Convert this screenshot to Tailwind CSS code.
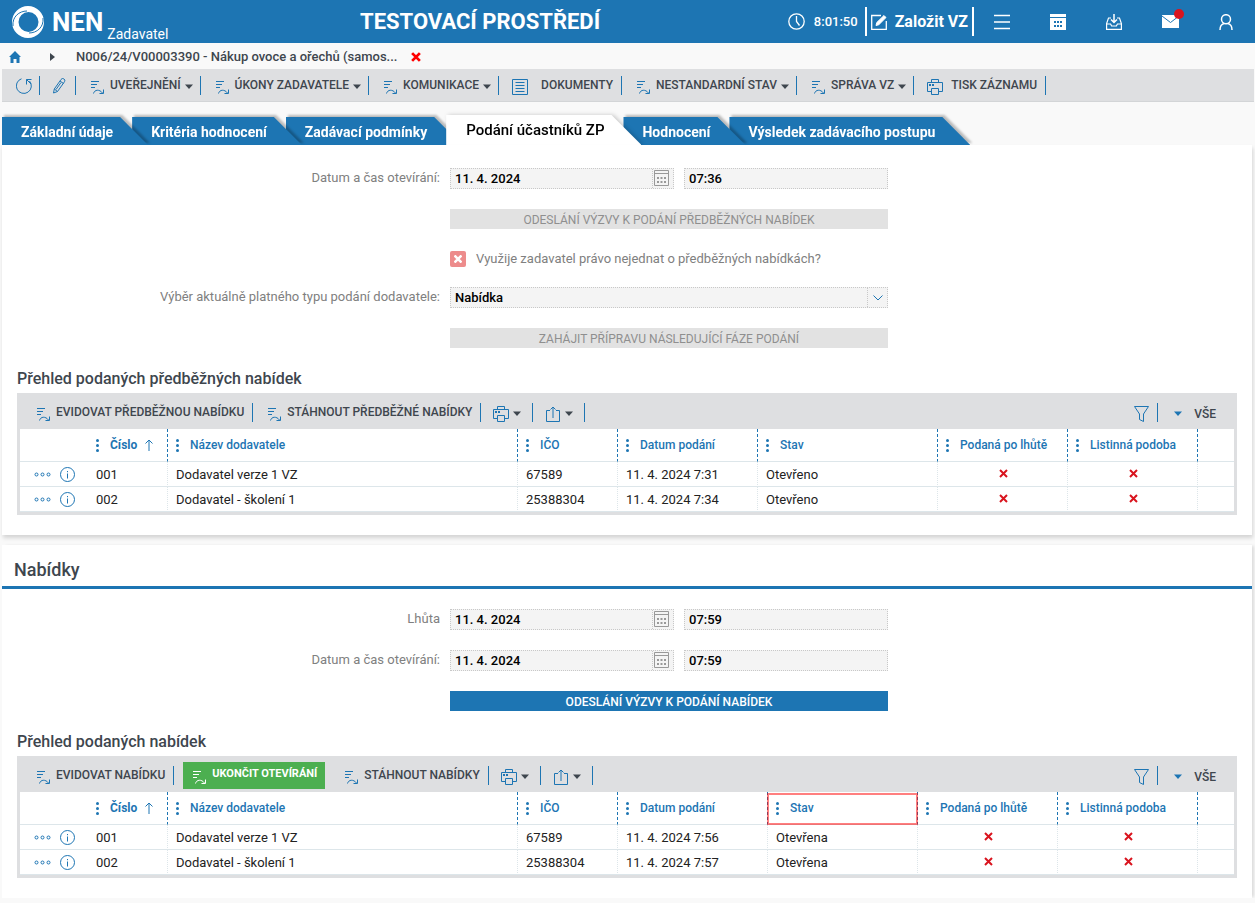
<!DOCTYPE html>
<html lang="cs">
<head>
    <meta charset="UTF-8">
    <meta name="viewport" content="width=device-width, initial-scale=1.0">
    <title>NEN - Zadavatel</title>
    <script src="https://cdn.jsdelivr.net/npm/@tailwindcss/browser@4"></script>
</head>
<body class="bg-[#f9f9f9] font-['Roboto',sans-serif] text-[13px] text-[#3e464e]">

    <!-- icons -->
    <svg class="hidden">
        <symbol id="i-flow" viewBox="0 -1 14 19" fill="none" stroke="currentColor">
            <path d="M1 5.500h8M1 8.500h6M1 11.500h4"/>
            <path d="M3.500 17.500c1-4 6-4.500 9-.5M13.500 13.500v4h-4"/>
        </symbol>
        <symbol id="i-print" viewBox="0 0 16 16" fill="none" stroke="currentColor">
            <path d="M4.500 3.500v-3h7v3M4.500 12.500h-4v-9h15v9h-4M4.500 9.500h7v6h-7z"/>
            <path d="M2 6h2M5 6h2" stroke-width="2"/>
        </symbol>
        <symbol id="i-share" viewBox="0 0 14 16" fill="none" stroke="currentColor">
            <path d="M4 4.500H.5v11h13v-11H10M7 12V1M4.500 3.500L7 1l2.500 2.500"/>
        </symbol>
        <symbol id="i-funnel" viewBox="0 0 15 16" fill="none" stroke="currentColor">
            <path d="M.5 .5h14L9.500 8v7.500l-4-2V8z"/>
        </symbol>
        <symbol id="i-caret" viewBox="0 0 8 5"><path d="M0 .5h8L4 5z" fill="currentColor"/></symbol>
        <symbol id="i-dots" viewBox="0 0 3 13" fill="currentColor">
            <circle cx="1.500" cy="1.500" r="1.500"/><circle cx="1.500" cy="6.500" r="1.500"/><circle cx="1.500" cy="11.500" r="1.500"/>
        </symbol>
        <symbol id="i-up" viewBox="0 0 8 12" fill="none" stroke="currentColor"><path d="M4 12V1M.5 4.500L4 1l3.500 3.500"/></symbol>
        <symbol id="i-more" viewBox="0 0 17 5" fill="none" stroke="currentColor">
            <circle cx="2.500" cy="2.500" r="1.500"/><circle cx="8.500" cy="2.500" r="1.500"/><circle cx="14.500" cy="2.500" r="1.500"/>
        </symbol>
        <symbol id="i-info" viewBox="0 0 15 15" fill="none" stroke="currentColor">
            <circle cx="7.500" cy="7.500" r="7"/><path d="M7.500 6.500v5M7.500 4v1.200"/>
        </symbol>
        <symbol id="i-x" viewBox="0 0 9 9"><path d="M1 1l7 7M8 1L1 8" stroke="currentColor" stroke-width="2"/></symbol>
        <symbol id="i-cal" viewBox="0 0 15 16" fill="none" stroke="currentColor">
            <path d="M.5 .5h14v15H.5zM.5 3.500h14"/>
            <path d="M3 8h2M6.500 8h2M10 8h2M3 12h2M6.500 12h2M10 12h2" stroke-width="2"/>
        </symbol>
    </svg>

    <header class="flex h-[43px] items-center bg-[#1d75b3] pr-px text-white">
        <div class="flex h-full w-[360px] shrink-0 items-center pl-3">
            <svg class="size-8" viewBox="0 0 32 32">
                <path fill="currentColor" fill-rule="evenodd" d="M16 0a16 16 0 1 1 0 32a16 16 0 1 1 0-32zM16.500 6a10 10 0 1 0 0 20a10 10 0 1 0 0-20z"/>
                <path d="M1 20C0 11 7 5 15 5M31 12c1 9-6 15-14 15" fill="none" stroke="#1d75b3"/>
            </svg>
            <span class="ml-2 text-[26px] leading-8 font-bold">NEN</span>
            <span class="mb-px ml-1 self-end text-sm leading-4">Zadavatel</span>
        </div>
        <div class="text-[22px] font-bold">TESTOVACÍ PROSTŘEDÍ</div>
        <div class="ml-auto flex items-center">
            <svg class="size-[17px]" viewBox="0 0 17 17" fill="none" stroke="currentColor" stroke-width="1.300"><circle cx="8.500" cy="8.500" r="7.700"/><path d="M8.500 3v5.500l3 4"/></svg>
            <span class="mr-[7px] ml-[9px] font-medium">8:01:50</span>
            <button class="flex h-[29px] items-center gap-2 border-x-2 border-white px-1 text-base font-bold">
                <svg class="size-4" viewBox="0 0 16 16" fill="none" stroke="currentColor"><path d="M10 1.500H.7v13.800h14.600V7" stroke-width="1.300"/><path d="M5 11.500l.8-3L13 1.500l2 2-7.200 7.200z" fill="currentColor"/></svg>
                Založit VZ
            </button>
            <button class="flex w-14 justify-center" aria-label="Menu">
                <svg class="size-4" viewBox="0 0 16 16" stroke="currentColor" stroke-width="1.500"><path d="M0 1.500h16M0 8h16M0 14.500h16"/></svg>
            </button>
            <button class="flex w-14 justify-center" aria-label="Kalendář">
                <svg class="size-4" viewBox="0 0 16 16"><path d="M0 0h16v3H0zM0 4h16v12H0z" fill="currentColor"/><path d="M4 8h2M7 8h2M10 8h2M4 12h2M7 12h2M10 12h2" stroke="#1d75b3" stroke-width="2"/></svg>
            </button>
            <button class="flex w-14 justify-center" aria-label="Přijaté">
                <svg class="size-4" viewBox="0 0 16 16" fill="none" stroke="currentColor" stroke-width="1.200"><path d="M5 4H2.500L.6 9.500v5.900h14.800V9.500L13.500 4H11M.6 10h4l1 2h4.800l1-2h4"/><path d="M8 0v8.500M5 5.500l3 3 3-3" stroke-width="1.500"/></svg>
            </button>
            <button class="relative flex w-14 justify-center" aria-label="Zprávy">
                <svg class="h-[13px] w-[17px]" viewBox="0 0 17 13"><path d="M0 0h17v13H0z" fill="currentColor"/><path d="M0 1l8.500 6.500L17 1" fill="none" stroke="#1d75b3"/></svg>
                <span class="absolute -top-1.5 right-3.5 size-2.5 rounded-full bg-[#d9141e]"></span>
            </button>
            <button class="flex w-14 justify-center" aria-label="Uživatel">
                <svg class="h-4 w-[14px]" viewBox="0 0 14 16" fill="none" stroke="currentColor" stroke-width="1.500"><ellipse cx="7" cy="5.200" rx="4.500" ry="4.500"/><path d="M1 16c0-4 2-6 4-6.500M13 16c0-4-2-6-4-6.500"/></svg>
            </button>
        </div>
    </header>

    <nav class="flex h-[26px] items-center pt-0.5 pl-[9px] font-medium">
        <a href="#" class="text-[#1d75b3]" aria-label="Domů">
            <svg class="h-3 w-3" viewBox="0 0 12 12"><path d="M6 0l6 6h-1.500v6h-3V8h-3v4h-3V6H0z" fill="currentColor"/></svg>
        </a>
        <svg class="ml-[29px] h-2 w-[5px]" viewBox="0 0 5 8"><path d="M0 0l5 4-5 4z" fill="currentColor"/></svg>
        <a href="#" class="ml-[21px]">N006/24/V00003390 - Nákup ovoce a ořechů (samos...</a>
        <button class="ml-[14px] text-[#f00]" aria-label="Zavřít"><svg class="size-[10px]" viewBox="0 0 9 9"><path d="M1 1l7 7M8 1L1 8" stroke="currentColor" stroke-width="2.500"/></svg></button>
    </nav>

    <div class="mr-px ml-0.5 flex h-[33px] border-b border-[#d3d5d7] bg-[#dedfe1] pt-[7px] text-xs font-medium">
        <button class="flex h-[19px] border-r border-[#1d75b3] pt-0.5 pr-[7px] pl-[14px] text-[#1d75b3]" aria-label="Obnovit">
            <svg class="size-4" viewBox="0 0 16 16" fill="none" stroke="currentColor"><path d="M5.500 .8A7.500 7.500 0 1 0 13.500 3M10.500 6.500V1.500h5M10.500 1.500L15 6"/></svg>
        </button>
        <button class="flex h-[19px] border-r border-[#1d75b3] pt-0.5 pr-2 pl-3 text-[#1d75b3]" aria-label="Upravit">
            <svg class="h-4 w-[15px]" viewBox="0 0 15 16" fill="none" stroke="currentColor"><path d="M1.500 15l.8-4L9 1.500a2 2 0 0 1 3.500 2.200L5.500 13.500zM8 3l3.500 2.500M2.300 11l3.200 2.500M4 11.500l5-7"/></svg>
        </button>
        <button class="flex h-[19px] items-center border-r border-[#1d75b3] pr-[7px] pb-0.5 pl-[14px]">
            <svg class="mr-1.5 h-[19px] w-[14px] text-[#1d75b3]"><use href="#i-flow"/></svg>UVEŘEJNĚNÍ<svg class="mt-1 ml-1 h-[5px] w-2"><use href="#i-caret"/></svg>
        </button>
        <button class="flex h-[19px] items-center border-r border-[#1d75b3] pr-[7px] pb-0.5 pl-[14px]">
            <svg class="mr-1.5 h-[19px] w-[14px] text-[#1d75b3]"><use href="#i-flow"/></svg>ÚKONY ZADAVATELE<svg class="mt-1 ml-1 h-[5px] w-2"><use href="#i-caret"/></svg>
        </button>
        <button class="flex h-[19px] items-center border-r border-[#1d75b3] pr-[7px] pb-0.5 pl-[14px]">
            <svg class="mr-1.5 h-[19px] w-[14px] text-[#1d75b3]"><use href="#i-flow"/></svg>KOMUNIKACE<svg class="mt-1 ml-1 h-[5px] w-2"><use href="#i-caret"/></svg>
        </button>
        <button class="flex h-[19px] items-center border-r border-[#1d75b3] pr-2 pb-0.5 pl-[13px]">
            <svg class="mt-1 mr-[13px] size-4 text-[#1d75b3]" viewBox="0 0 16 16" fill="none" stroke="currentColor"><path d="M.5 .5h15v15H.5zM3.500 3.500h9M3.500 6.500h9M3.500 9.500h9M3.500 12.500h9"/></svg>DOKUMENTY
        </button>
        <button class="flex h-[19px] items-center border-r border-[#1d75b3] pr-[7px] pb-0.5 pl-[14px]">
            <svg class="mr-1.5 h-[19px] w-[14px] text-[#1d75b3]"><use href="#i-flow"/></svg>NESTANDARDNÍ STAV<svg class="mt-1 ml-1 h-[5px] w-2"><use href="#i-caret"/></svg>
        </button>
        <button class="flex h-[19px] items-center border-r border-[#1d75b3] pr-[7px] pb-0.5 pl-[14px]">
            <svg class="mr-1.5 h-[19px] w-[14px] text-[#1d75b3]"><use href="#i-flow"/></svg>SPRÁVA VZ<svg class="mt-1 ml-1 h-[5px] w-2"><use href="#i-caret"/></svg>
        </button>
        <button class="flex h-[19px] items-center border-r border-[#1d75b3] pr-2 pb-0.5 pl-[13px]">
            <svg class="mt-1 mr-2 size-4 text-[#1d75b3]"><use href="#i-print"/></svg>TISK ZÁZNAMU
        </button>
    </div>

    <!-- tabs -->
    <div class="mt-[13px] ml-0.5 flex h-[30px] items-end text-sm font-bold text-white">
        <a href="#" class="relative z-6 -mr-4 drop-shadow-[2px_-2px_1px_rgba(0,0,0,0.25)]"><span class="block h-7 bg-[#1d75b3] pr-[35px] pl-[19px] leading-[30px] [clip-path:polygon(0_0,calc(100%-28px)_0,100%_100%,0_100%)]">Základní údaje</span></a>
        <a href="#" class="relative z-5 -mr-4 drop-shadow-[2px_-2px_1px_rgba(0,0,0,0.25)]"><span class="block h-7 bg-[#1d75b3] pr-[35px] pl-[19px] leading-[30px] [clip-path:polygon(0_0,calc(100%-28px)_0,100%_100%,0_100%)]">Kritéria hodnocení</span></a>
        <a href="#" class="relative z-4 -mr-4 drop-shadow-[2px_-2px_1px_rgba(0,0,0,0.25)]"><span class="block h-7 bg-[#1d75b3] pr-[35px] pl-[19px] leading-[30px] [clip-path:polygon(0_0,calc(100%-28px)_0,100%_100%,0_100%)]">Zadávací podmínky</span></a>
        <a href="#" class="relative z-10 -mr-[18px] text-[15px] font-medium text-black drop-shadow-[2px_0_2px_rgba(0,0,0,0.2)]"><span class="block h-[30px] bg-white pr-[37px] pl-5 leading-[30px] [clip-path:polygon(0_0,calc(100%-30px)_0,100%_100%,0_100%)]">Podání účastníků ZP</span></a>
        <a href="#" class="relative z-3 -mr-4 drop-shadow-[2px_-2px_1px_rgba(0,0,0,0.25)]"><span class="block h-7 bg-[#1d75b3] pr-[35px] pl-[19px] leading-[30px] [clip-path:polygon(0_0,calc(100%-28px)_0,100%_100%,0_100%)]">Hodnocení</span></a>
        <a href="#" class="relative z-2 drop-shadow-[2px_-2px_1px_rgba(0,0,0,0.25)]"><span class="block h-7 bg-[#1d75b3] pr-[35px] pl-[19px] leading-[30px] [clip-path:polygon(0_0,calc(100%-28px)_0,100%_100%,0_100%)]">Výsledek zadávacího postupu</span></a>
    </div>

    <section class="relative z-10 mr-[3px] ml-0.5 bg-white pt-[23px] pb-5 shadow-[1px_3px_4px_rgba(0,0,0,0.15)]">
        <form class="flex flex-col gap-5">
            <div class="flex gap-[10px]">
                <label for="open1" class="w-[438px] text-right leading-5 text-[#808080]">Datum a čas otevírání:</label>
                <div class="flex h-[21px] w-56 border border-dotted border-[#c8c8c8] bg-[#f4f4f4]">
                    <input id="open1" type="text" value="11. 4. 2024" class="min-w-0 flex-1 px-1 font-medium text-black">
                    <button type="button" class="flex w-[21px] justify-center border-l border-dotted border-[#c8c8c8] pt-px pr-1 text-[#999]" aria-label="Kalendář"><svg class="h-4 w-[15px] shrink-0"><use href="#i-cal"/></svg></button>
                </div>
                <input type="text" aria-label="Čas otevírání" value="07:36" class="h-[21px] w-51 border border-dotted border-[#c8c8c8] bg-[#f4f4f4] px-1 font-medium text-black">
            </div>
            <button type="button" disabled class="ml-[448px] h-5 w-[438px] bg-[#e2e2e2] pt-0.5 text-xs leading-[18px] text-[#8f8f8f]">ODESLÁNÍ VÝZVY K PODÁNÍ PŘEDBĚŽNÝCH NABÍDEK</button>
            <div class="ml-[448px] flex h-[18px] items-end gap-[10px]">
                <span class="relative size-4">
                    <input id="right" type="checkbox" class="block size-4 appearance-none rounded-[2px] bg-[#ed8c8c]">
                    <svg class="pointer-events-none absolute top-1 left-1 size-2 text-white" viewBox="0 0 8 8"><path d="M.5 .5l7 7M7.500 .5l-7 7" stroke="currentColor" stroke-width="2.500"/></svg>
                </span>
                <label for="right" class="leading-4 text-[#808080]">Využije zadavatel právo nejednat o předběžných nabídkách?</label>
            </div>
            <div class="flex gap-[10px]">
                <label for="kind" class="w-[438px] text-right leading-5 text-[#808080]">Výběr aktuálně platného typu podání dodavatele:</label>
                <div class="relative flex h-[21px] w-[438px] border border-dotted border-[#c8c8c8] bg-[#f4f4f4]">
                    <select id="kind" class="flex-1 appearance-none px-1 font-medium text-black"><option>Nabídka</option></select>
                    <span class="pointer-events-none absolute inset-y-0 right-0 flex w-5 items-center justify-center border-l border-dotted border-[#c8c8c8] text-[#1d75b3]"><svg class="h-[6px] w-[10px]" viewBox="0 0 10 6" fill="none" stroke="currentColor"><path d="M.5 .5L5 5 9.500 .5"/></svg></span>
                </div>
            </div>
            <button type="button" disabled class="ml-[448px] h-5 w-[438px] bg-[#e2e2e2] pt-0.5 text-xs leading-[18px] text-[#8f8f8f]">ZAHÁJIT PŘÍPRAVU NÁSLEDUJÍCÍ FÁZE PODÁNÍ</button>
        </form>

        <h3 class="mt-[18px] ml-[15px] pb-0.5 text-base leading-[25px] font-medium">Přehled podaných předběžných nabídek</h3>
        <div class="mx-[15px] bg-[#dedfe1] px-[3px] pb-[3px]">
            <div class="flex h-9 pt-[10px] text-xs font-medium">
                <button class="flex h-[19px] items-center border-r border-[#1d75b3] pr-2 pb-0.5 pl-4">
                    <svg class="mr-1.5 h-[19px] w-[14px] text-[#1d75b3]"><use href="#i-flow"/></svg>EVIDOVAT PŘEDBĚŽNOU NABÍDKU
                </button>
                <button class="flex h-[19px] items-center border-r border-[#1d75b3] pr-2 pb-0.5 pl-[14px]">
                    <svg class="mr-1.5 h-[19px] w-[14px] text-[#1d75b3]"><use href="#i-flow"/></svg>STÁHNOUT PŘEDBĚŽNÉ NABÍDKY
                </button>
                <button class="flex h-[19px] items-center border-r border-[#1d75b3] pr-[11px] pb-0.5 pl-3" aria-label="Tisk">
                    <svg class="mt-1 size-4 text-[#1d75b3]"><use href="#i-print"/></svg><svg class="mt-1 ml-1 h-[5px] w-2"><use href="#i-caret"/></svg>
                </button>
                <button class="flex h-[19px] items-center border-r border-[#1d75b3] pr-[11px] pb-0.5 pl-[13px]" aria-label="Export">
                    <svg class="mt-1 h-4 w-[14px] text-[#1d75b3]"><use href="#i-share"/></svg><svg class="mt-1 ml-[5px] h-[5px] w-2"><use href="#i-caret"/></svg>
                </button>
                <button class="ml-auto flex h-[19px] items-center border-r border-[#1d75b3] pr-2 pb-0.5 text-[#1d75b3]" aria-label="Filtr">
                    <svg class="mt-1 h-4 w-[15px]"><use href="#i-funnel"/></svg>
                </button>
                <button class="flex h-[19px] items-center pt-0.5 pr-[18px] pl-4"><svg class="mr-3 h-[5px] w-2 text-[#1d75b3]"><use href="#i-caret"/></svg>VŠE</button>
            </div>
            <table class="w-full table-fixed border-separate border-spacing-0 bg-white text-left">
                <colgroup><col class="w-[68px]"><col class="w-20"><col class="w-[350px]"><col class="w-[100px]"><col class="w-[140px]"><col class="w-[180px]"><col class="w-[130px]"><col class="w-[130px]"><col></colgroup>
                <thead>
                    <tr class="h-[33px] text-xs text-[#1d75b3] *:border-b *:border-b-[#dde6ea] *:p-0 *:font-medium">
                        <th></th>
                        <th class="border-r border-r-[#1d75b3] [border-right-style:dashed]"><div class="flex items-center pl-2 font-bold"><svg class="mr-[11px] h-[13px] w-[3px]"><use href="#i-dots"/></svg>Číslo<svg class="ml-2 h-3 w-2"><use href="#i-up"/></svg></div></th>
                        <th class="border-r border-r-[#1d75b3] [border-right-style:dashed]"><div class="flex items-center pl-2"><svg class="mr-[11px] h-[13px] w-[3px]"><use href="#i-dots"/></svg>Název dodavatele</div></th>
                        <th class="border-r border-r-[#1d75b3] [border-right-style:dashed]"><div class="flex items-center pl-2"><svg class="mr-[11px] h-[13px] w-[3px]"><use href="#i-dots"/></svg>IČO</div></th>
                        <th class="border-r border-r-[#1d75b3] [border-right-style:dashed]"><div class="flex items-center pl-2"><svg class="mr-[11px] h-[13px] w-[3px]"><use href="#i-dots"/></svg>Datum podání</div></th>
                        <th class="border-r border-r-[#1d75b3] [border-right-style:dashed]"><div class="flex items-center pl-2"><svg class="mr-[11px] h-[13px] w-[3px]"><use href="#i-dots"/></svg>Stav</div></th>
                        <th class="border-r border-r-[#1d75b3] [border-right-style:dashed]"><div class="flex items-center pl-2"><svg class="mr-[11px] h-[13px] w-[3px]"><use href="#i-dots"/></svg>Podaná po lhůtě</div></th>
                        <th class="border-r border-r-[#1d75b3] [border-right-style:dashed]"><div class="flex items-center pl-2"><svg class="mr-[11px] h-[13px] w-[3px]"><use href="#i-dots"/></svg>Listinná podoba</div></th>
                        <th></th>
                    </tr>
                </thead>
                <tbody class="text-[#222]">
                    <tr class="h-[25px] *:border-r *:border-b *:border-[#dde6ea] *:pt-px *:pb-0 *:pl-2 *:[border-right-style:dotted]">
                        <td class="border-r-0!"><div class="flex items-center gap-[9px] pl-[6px] text-[#1d75b3]"><svg class="h-[5px] w-[17px] shrink-0"><use href="#i-more"/></svg><svg class="size-[15px] shrink-0"><use href="#i-info"/></svg></div></td>
                        <td>001</td><td>Dodavatel verze 1 VZ</td><td>67589</td><td>11. 4. 2024 7:31</td><td>Otevřeno</td>
                        <td class="pr-1.5 align-top text-[#d9141e]"><svg class="mx-auto mt-1.5 size-[9px]"><use href="#i-x"/></svg></td>
                        <td class="pr-1.5 align-top text-[#d9141e]"><svg class="mx-auto mt-1.5 size-[9px]"><use href="#i-x"/></svg></td>
                        <td class="border-r-0!"></td>
                    </tr>
                    <tr class="h-[25px] *:border-r *:border-b *:border-[#dde6ea] *:pt-px *:pb-0 *:pl-2 *:[border-right-style:dotted]">
                        <td class="border-r-0!"><div class="flex items-center gap-[9px] pl-[6px] text-[#1d75b3]"><svg class="h-[5px] w-[17px] shrink-0"><use href="#i-more"/></svg><svg class="size-[15px] shrink-0"><use href="#i-info"/></svg></div></td>
                        <td>002</td><td>Dodavatel - školení 1</td><td>25388304</td><td>11. 4. 2024 7:34</td><td>Otevřeno</td>
                        <td class="pr-1.5 align-top text-[#d9141e]"><svg class="mx-auto mt-1.5 size-[9px]"><use href="#i-x"/></svg></td>
                        <td class="pr-1.5 align-top text-[#d9141e]"><svg class="mx-auto mt-1.5 size-[9px]"><use href="#i-x"/></svg></td>
                        <td class="border-r-0!"></td>
                    </tr>
                </tbody>
            </table>
        </div>
    </section>

    <section class="mt-[10px] mr-[3px] ml-0.5 bg-white pb-5 shadow-[3px_0_3px_-1px_rgba(0,0,0,0.12)]">
        <h2 class="border-b-3 border-[#1d75b3] pt-[11px] pb-0.5 pl-3 text-lg leading-7 font-medium">Nabídky</h2>
        <form class="mt-5 flex flex-col gap-5">
            <div class="flex gap-[10px]">
                <label for="limit" class="w-[438px] text-right leading-5 text-[#808080]">Lhůta</label>
                <div class="flex h-[21px] w-56 border border-dotted border-[#c8c8c8] bg-[#f4f4f4]">
                    <input id="limit" type="text" value="11. 4. 2024" class="min-w-0 flex-1 px-1 font-medium text-black">
                    <button type="button" class="flex w-[21px] justify-center border-l border-dotted border-[#c8c8c8] pt-px pr-1 text-[#999]" aria-label="Kalendář"><svg class="h-4 w-[15px] shrink-0"><use href="#i-cal"/></svg></button>
                </div>
                <input type="text" aria-label="Čas lhůty" value="07:59" class="h-[21px] w-51 border border-dotted border-[#c8c8c8] bg-[#f4f4f4] px-1 font-medium text-black">
            </div>
            <div class="flex gap-[10px]">
                <label for="open2" class="w-[438px] text-right leading-5 text-[#808080]">Datum a čas otevírání:</label>
                <div class="flex h-[21px] w-56 border border-dotted border-[#c8c8c8] bg-[#f4f4f4]">
                    <input id="open2" type="text" value="11. 4. 2024" class="min-w-0 flex-1 px-1 font-medium text-black">
                    <button type="button" class="flex w-[21px] justify-center border-l border-dotted border-[#c8c8c8] pt-px pr-1 text-[#999]" aria-label="Kalendář"><svg class="h-4 w-[15px] shrink-0"><use href="#i-cal"/></svg></button>
                </div>
                <input type="text" aria-label="Čas otevírání" value="07:59" class="h-[21px] w-51 border border-dotted border-[#c8c8c8] bg-[#f4f4f4] px-1 font-medium text-black">
            </div>
            <button type="button" class="ml-[448px] h-5 w-[438px] bg-[#1d75b3] pt-0.5 text-xs leading-[18px] font-medium text-white">ODESLÁNÍ VÝZVY K PODÁNÍ NABÍDEK</button>
        </form>

        <h3 class="mt-[18px] ml-[15px] pb-0.5 text-base leading-[25px] font-medium">Přehled podaných nabídek</h3>
        <div class="mx-[15px] bg-[#dedfe1] px-[3px] pb-[3px]">
            <div class="flex h-9 pt-[10px] text-xs font-medium">
                <button class="flex h-[19px] items-center border-r border-[#1d75b3] pr-2 pb-0.5 pl-4">
                    <svg class="mr-1.5 h-[19px] w-[14px] text-[#1d75b3]"><use href="#i-flow"/></svg>EVIDOVAT NABÍDKU
                </button>
                <button class="-mt-1 mr-[5px] ml-[9px] flex h-[27px] items-center bg-[#4caf50] pr-2 pb-0.5 pl-[9px] text-[11px] font-bold text-white">
                    <svg class="mr-1.5 h-[19px] w-[14px]"><use href="#i-flow"/></svg>UKONČIT OTEVÍRÁNÍ
                </button>
                <button class="flex h-[19px] items-center border-r border-[#1d75b3] pr-2 pb-0.5 pl-[14px]">
                    <svg class="mr-1.5 h-[19px] w-[14px] text-[#1d75b3]"><use href="#i-flow"/></svg>STÁHNOUT NABÍDKY
                </button>
                <button class="flex h-[19px] items-center border-r border-[#1d75b3] pr-[11px] pb-0.5 pl-3" aria-label="Tisk">
                    <svg class="mt-1 size-4 text-[#1d75b3]"><use href="#i-print"/></svg><svg class="mt-1 ml-1 h-[5px] w-2"><use href="#i-caret"/></svg>
                </button>
                <button class="flex h-[19px] items-center border-r border-[#1d75b3] pr-[11px] pb-0.5 pl-[13px]" aria-label="Export">
                    <svg class="mt-1 h-4 w-[14px] text-[#1d75b3]"><use href="#i-share"/></svg><svg class="mt-1 ml-[5px] h-[5px] w-2"><use href="#i-caret"/></svg>
                </button>
                <button class="ml-auto flex h-[19px] items-center border-r border-[#1d75b3] pr-2 pb-0.5 text-[#1d75b3]" aria-label="Filtr">
                    <svg class="mt-1 h-4 w-[15px]"><use href="#i-funnel"/></svg>
                </button>
                <button class="flex h-[19px] items-center pt-0.5 pr-[18px] pl-4"><svg class="mr-3 h-[5px] w-2 text-[#1d75b3]"><use href="#i-caret"/></svg>VŠE</button>
            </div>
            <table class="w-full table-fixed border-separate border-spacing-0 bg-white text-left">
                <colgroup><col class="w-[68px]"><col class="w-20"><col class="w-[350px]"><col class="w-[100px]"><col class="w-[150px]"><col class="w-[150px]"><col class="w-[140px]"><col class="w-[140px]"><col></colgroup>
                <thead>
                    <tr class="h-[33px] text-xs text-[#1d75b3] *:border-b *:border-b-[#dde6ea] *:p-0 *:font-medium">
                        <th></th>
                        <th class="border-r border-r-[#1d75b3] [border-right-style:dashed]"><div class="flex items-center pl-2 font-bold"><svg class="mr-[11px] h-[13px] w-[3px]"><use href="#i-dots"/></svg>Číslo<svg class="ml-2 h-3 w-2"><use href="#i-up"/></svg></div></th>
                        <th class="border-r border-r-[#1d75b3] [border-right-style:dashed]"><div class="flex items-center pl-2"><svg class="mr-[11px] h-[13px] w-[3px]"><use href="#i-dots"/></svg>Název dodavatele</div></th>
                        <th class="border-r border-r-[#1d75b3] [border-right-style:dashed]"><div class="flex items-center pl-2"><svg class="mr-[11px] h-[13px] w-[3px]"><use href="#i-dots"/></svg>IČO</div></th>
                        <th class="border-r border-r-[#1d75b3] [border-right-style:dashed]"><div class="flex items-center pl-2"><svg class="mr-[11px] h-[13px] w-[3px]"><use href="#i-dots"/></svg>Datum podání</div></th>
                        <th class="relative border-r border-r-[#1d75b3] [border-right-style:dashed]"><span class="absolute top-px -right-px -bottom-px -left-px border-2 border-[#f00]/50"></span><div class="flex items-center pl-2"><svg class="mr-[11px] h-[13px] w-[3px]"><use href="#i-dots"/></svg>Stav</div></th>
                        <th class="border-r border-r-[#1d75b3] [border-right-style:dashed]"><div class="flex items-center pl-2"><svg class="mr-[11px] h-[13px] w-[3px]"><use href="#i-dots"/></svg>Podaná po lhůtě</div></th>
                        <th class="border-r border-r-[#1d75b3] [border-right-style:dashed]"><div class="flex items-center pl-2"><svg class="mr-[11px] h-[13px] w-[3px]"><use href="#i-dots"/></svg>Listinná podoba</div></th>
                        <th></th>
                    </tr>
                </thead>
                <tbody class="text-[#222]">
                    <tr class="h-[25px] *:border-r *:border-b *:border-[#dde6ea] *:pt-px *:pb-0 *:pl-2 *:[border-right-style:dotted]">
                        <td class="border-r-0!"><div class="flex items-center gap-[9px] pl-[6px] text-[#1d75b3]"><svg class="h-[5px] w-[17px] shrink-0"><use href="#i-more"/></svg><svg class="size-[15px] shrink-0"><use href="#i-info"/></svg></div></td>
                        <td>001</td><td>Dodavatel verze 1 VZ</td><td>67589</td><td>11. 4. 2024 7:56</td><td>Otevřena</td>
                        <td class="pr-1.5 align-top text-[#d9141e]"><svg class="mx-auto mt-1.5 size-[9px]"><use href="#i-x"/></svg></td>
                        <td class="pr-1.5 align-top text-[#d9141e]"><svg class="mx-auto mt-1.5 size-[9px]"><use href="#i-x"/></svg></td>
                        <td class="border-r-0!"></td>
                    </tr>
                    <tr class="h-[25px] *:border-r *:border-b *:border-[#dde6ea] *:pt-px *:pb-0 *:pl-2 *:[border-right-style:dotted]">
                        <td class="border-r-0!"><div class="flex items-center gap-[9px] pl-[6px] text-[#1d75b3]"><svg class="h-[5px] w-[17px] shrink-0"><use href="#i-more"/></svg><svg class="size-[15px] shrink-0"><use href="#i-info"/></svg></div></td>
                        <td>002</td><td>Dodavatel - školení 1</td><td>25388304</td><td>11. 4. 2024 7:57</td><td>Otevřena</td>
                        <td class="pr-1.5 align-top text-[#d9141e]"><svg class="mx-auto mt-1.5 size-[9px]"><use href="#i-x"/></svg></td>
                        <td class="pr-1.5 align-top text-[#d9141e]"><svg class="mx-auto mt-1.5 size-[9px]"><use href="#i-x"/></svg></td>
                        <td class="border-r-0!"></td>
                    </tr>
                </tbody>
            </table>
        </div>
    </section>
</body>
</html>
